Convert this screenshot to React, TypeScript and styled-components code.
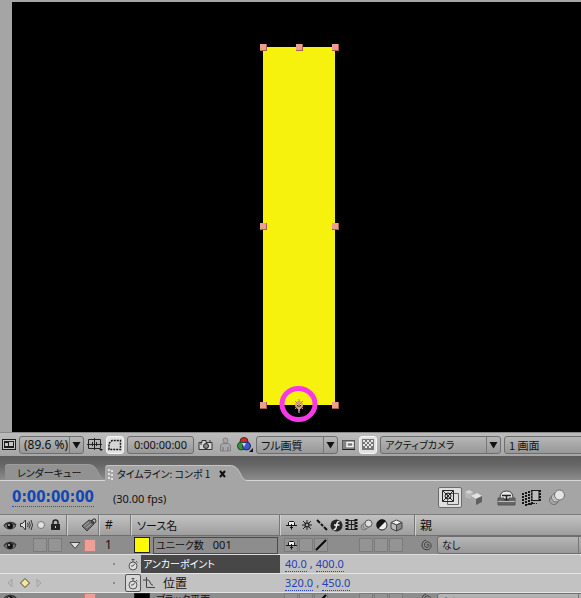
import React from "react";
import styled, { createGlobalStyle, css } from "styled-components";

const latin = `"Noto Sans", "Noto Sans CJK JP", sans-serif`;
const japanese = `"Noto Sans CJK JP", "Noto Sans", sans-serif`;

const GlobalStyle = createGlobalStyle`
  *, *::before, *::after { box-sizing: border-box; }
  body { margin: 0; background: #a5a5a5; overflow: hidden; }
  button, select { font: inherit; color: inherit; margin: 0; padding: 0; }
  svg { display: block; flex: none; }
`;

const Window = styled.div`
  display: flex;
  flex-direction: column;
  height: 100vh;
  overflow: hidden;
  background: #a5a5a5;
  color: #111;
  font: 12px/16px ${latin};
`;

/* ---------- viewer ---------- */

const Viewer = styled.main`
  flex: 1;
  min-height: 0;
  display: flex;
  padding: 2px 0 0 12px;
  background: #a5a5a5;
`;

const Stage = styled.div`
  position: relative;
  flex: 1;
  background: #000;
  overflow: hidden;
`;

const Solid = styled.div`
  position: absolute;
  left: 251px;
  top: 45px;
  width: 72px;
  height: 358px;
  background: #f6f20e;
`;

const Handle = styled.i<{ $x: number; $y: number }>`
  position: absolute;
  left: ${(p) => p.$x}%;
  top: ${(p) => p.$y}%;
  width: 7px;
  height: 7px;
  margin: -3px 0 0 -3px;
  background: #eaa090;
  border: solid #a86048;
  border-width: 0 1px 1px 0;
`;

const Anchor = styled.svg`
  position: absolute;
  left: 50%;
  top: 100%;
  margin: -20px 0 0 -20px;
`;

/* ---------- viewer tool bar ---------- */

const ToolBar = styled.div`
  display: flex;
  align-items: center;
  gap: 3px;
  height: 24px;
  padding: 0 0 0 2px;
  overflow: hidden;
  border-top: 1px solid #8a8a8a;
  background: linear-gradient(#bcbcbc, #a6a6a6);
`;

const ToolIcon = styled.button<{ $w: number; $lit?: boolean }>`
  flex: none;
  display: flex;
  align-items: center;
  justify-content: center;
  width: ${(p) => p.$w}px;
  height: 18px;
  border: 0;
  background: none;
  ${(p) =>
    p.$lit &&
    css`
      border: 1px solid #f4f4f4;
      border-radius: 3px;
      background: #e2e2e2;
    `}
`;

const field = css`
  height: 18px;
  border: 1px solid #6e6e6e;
  border-radius: 3px;
  background: linear-gradient(#b6b6b6, #989898);
`;

const TimeButton = styled.button`
  ${field}
  flex: none;
  width: 67px;
  line-height: 16px;
  font-size: 11px;
`;

const DropBox = styled.div<{ $w?: number; $jp?: boolean; $size: number }>`
  ${field}
  display: flex;
  flex: ${(p) => (p.$w ? "none" : "1")};
  width: ${(p) => (p.$w ? `${p.$w}px` : "auto")};
  margin-right: ${(p) => (p.$w ? 0 : -12)}px;
  min-width: 0;
  overflow: hidden;
  font-family: ${(p) => (p.$jp ? japanese : latin)};
  font-size: ${(p) => p.$size}px;
`;

const Drop = styled.select`
  flex: 1;
  min-width: 0;
  appearance: none;
  border: 0;
  padding-left: 4px;
  background: none;
  font-feature-settings: "palt";
  line-height: 16px;
  outline: 0;
`;

const DropArrow = styled.span`
  flex: none;
  display: flex;
  align-items: center;
  justify-content: center;
  width: 14px;
  border-left: 1px solid #777;
  pointer-events: none;
`;

type SelectProps = { label: string; value: string; width?: number; jp?: boolean; arrow?: boolean; size?: number };
const Select = ({ label, value, width, jp, arrow = true, size = 11 }: SelectProps) => (
  <DropBox $w={width} $jp={jp} $size={size}>
    <Drop aria-label={label} defaultValue={value}>
      <option>{value}</option>
    </Drop>
    {arrow && (
      <DropArrow>
        <svg width="9" height="8"><path d="M0.5 1H8.500L4.500 7.500z" fill="#111" /></svg>
      </DropArrow>
    )}
  </DropBox>
);

/* ---------- tabs ---------- */

const TabBar = styled.div`
  display: flex;
  align-items: flex-end;
  height: 25px;
  padding-left: 5px;
  border-bottom: 1px solid #d6d6d6;
  background: linear-gradient(#5c5c5c, #686868 40%, #8c8c8c);
`;

const Tab = styled.div<{ $active?: boolean }>`
  display: flex;
  height: 16px;
  margin-bottom: ${(p) => (p.$active ? "-1px" : "0")};
  color: ${(p) => (p.$active ? "#a5a5a5" : "#929292")};
`;

const TabBody = styled.div<{ $w: number; $edge: string }>`
  display: flex;
  align-items: center;
  width: ${(p) => p.$w}px;
  border-top: 1px solid ${(p) => p.$edge};
  border-radius: 3px 0 0 0;
  background: currentColor;
`;

const TabButton = styled.button`
  flex: 1;
  border: 0;
  background: none;
  color: #111;
  text-align: left;
  white-space: nowrap;
  font: 10px/14px ${japanese};
  font-feature-settings: "palt";
`;

const TabStart = styled.span`
  flex: none;
  width: 12px;
`;

const TabClose = styled.button`
  flex: none;
  width: 10px;
  height: 12px;
  border: 0;
  background: none;
`;

const TabCap = ({ edge }: { edge: string }) => (
  <svg width="18" height="16">
    <path d="M0 0C7 0 9 4 11 8S14 15 18 16H0z" fill="currentColor" />
    <path d="M0 0.500C7 0.500 9 4 11 8S14 15 18 15.500" fill="none" stroke={edge} />
  </svg>
);

/* ---------- timeline ---------- */

const TimeHeader = styled.div`
  display: flex;
  align-items: center;
  height: 34px;
  padding: 0 14px 0 12px;
  border-bottom: 1px solid #7c7c7c;
  background: #a5a5a5;
`;

const CurrentTime = styled.button`
  border: 0;
  border-bottom: 1px dotted #2350b8;
  background: none;
  color: #1445b4;
  font: bold 15px/18px "DejaVu Sans Condensed", "DejaVu Sans", sans-serif;
`;

const Rate = styled.span`
  flex: 1;
  padding: 3px 0 0 19px;
  white-space: nowrap;
  font-size: 11px;
`;

const HeaderTools = styled.div`
  display: flex;
  align-items: center;
  gap: 4px;
`;

const HeaderTool = styled.button<{ $lit?: boolean; $apart?: boolean }>`
  display: flex;
  align-items: center;
  justify-content: center;
  width: ${(p) => (p.$lit ? 24 : 21)}px;
  height: 21px;
  margin-left: ${(p) => (p.$apart ? 8 : 0)}px;
  margin-right: ${(p) => (p.$lit ? -3 : 0)}px;
  border: ${(p) => (p.$lit ? "1px solid #6c6c6c" : "0")};
  border-radius: 2px;
  background: ${(p) => (p.$lit ? "#dedede" : "none")};
`;

const Sheet = styled.table`
  width: 100%;
  border-collapse: separate;
  border-spacing: 0;
  table-layout: fixed;
  th, td { padding: 0; font-weight: normal; text-align: left; overflow: hidden; }
`;

const Col = styled.col<{ $w?: number }>`
  width: ${(p) => (p.$w ? `${p.$w}px` : "auto")};
`;

const HeadCell = styled.th`
  height: 21px;
  border-bottom: 1px solid #707070;
  border-left: 1px solid #d0d0d0;
  box-shadow: inset -1px 0 #777;
  background: linear-gradient(#c2c2c2, #9e9e9e);
  &:first-child { border-left: 0; }
  &:last-child { box-shadow: none; }
`;

const LayerCell = styled.td`
  height: 19px;
  border-bottom: 1px solid #dedede;
  background: #8d8d8d;
`;

const PropertyCell = styled.td`
  height: 19px;
  border-bottom: 1px solid #e4e4e4;
  background: #c2c2c2;
`;

const Line = styled.div<{ $pad?: number }>`
  display: flex;
  align-items: center;
  height: 18px;
  padding-left: ${(p) => p.$pad ?? 0}px;
  white-space: nowrap;
`;

const Slot = styled.span<{ $w?: number }>`
  flex: none;
  display: flex;
  align-items: center;
  justify-content: center;
  width: ${(p) => p.$w ?? 15}px;
`;

const SlotButton = styled.button<{ $w?: number; $box?: boolean }>`
  flex: none;
  display: flex;
  align-items: center;
  justify-content: center;
  width: ${(p) => p.$w ?? 14}px;
  height: 14px;
  margin-right: 1px;
  border: 1px solid ${(p) => (p.$box ? "#7c7c7c" : "transparent")};
  background: ${(p) => (p.$box ? "#949494" : "none")};
`;

const Jp = styled.span<{ $size?: number }>`
  font: ${(p) => p.$size ?? 12}px/16px ${japanese};
  font-feature-settings: "palt";
`;

const Swatch = styled.button<{ $c: string; $w: number }>`
  flex: none;
  width: ${(p) => p.$w}px;
  height: ${(p) => (p.$w > 13 ? 16 : 13)}px;
  border: 1px solid ${(p) => (p.$w > 13 ? "#222" : "#c08078")};
  background: ${(p) => p.$c};
`;

const LayerName = styled.button`
  flex: 1;
  display: flex;
  align-items: center;
  gap: 9px;
  height: 17px;
  margin: 0 2px 0 3px;
  padding-left: 2px;
  border: 1px solid #4a4a4a;
  background: none;
  font-size: 11px;
`;

const KeyButton = styled.button<{ $w: number }>`
  flex: none;
  width: ${(p) => p.$w}px;
  height: 16px;
  border: 0;
  background: none;
`;

const Gap = styled.span`
  flex: none;
  width: 69px;
`;

const Dot = styled.span`
  flex: none;
  width: 2px;
  height: 2px;
  margin-right: 10px;
  background: #8c8c8c;
`;

const Watch = styled.button<{ $on?: boolean }>`
  flex: none;
  display: flex;
  align-items: center;
  justify-content: center;
  width: 16px;
  height: 18px;
  border: ${(p) => (p.$on ? "1px solid #555" : "0")};
  border-radius: 2px;
  background: ${(p) => (p.$on ? "#d6d6d6" : "none")};
`;

const PropertyName = styled.button<{ $selected?: boolean }>`
  flex: 1;
  display: flex;
  align-items: center;
  gap: 7px;
  height: 18px;
  padding-left: 2px;
  border: 0;
  background: ${(p) => (p.$selected ? "#474747" : "none")};
  color: ${(p) => (p.$selected ? "#fff" : "#111")};
`;

const Value = styled.button`
  height: 15px;
  border: 0;
  border-bottom: 1px dotted #2a44b0;
  background: none;
  color: #2740b4;
  font-size: 11px;
  line-height: 14px;
`;

const Comma = styled.span`
  padding: 0 3px;
  color: #2740b4;
  font-size: 11px;
`;

const Clip = styled.div`
  display: flex;
  align-items: flex-start;
  height: 5px;
  overflow: hidden;
  background: #8d8d8d;
`;

const NextName = styled.span`
  flex: none;
  width: 130px;
  padding-left: 6px;
  font: 10px/12px ${japanese};
  font-feature-settings: "palt";
`;

/* ---------- drawings ---------- */

const Eye = () => (
  <svg width="14" height="11" viewBox="0 0 14 11">
    <path d="M1 6C3 2 10 1 13 5" fill="none" stroke="#333" strokeWidth="1.500" />
    <path d="M1 6C4 3 10 3 13 6C10 10 4 10 1 6z" fill="#777" stroke="#444" />
    <circle cx="7" cy="6" r="3" fill="#151515" />
    <circle cx="6" cy="5" r="1" fill="#bbb" />
  </svg>
);
const Speaker = () => (
  <svg width="14" height="12" viewBox="0 0 14 12" fill="none" stroke="#333">
    <path d="M1.500 4.500H3.500L6.500 1V11L3.500 7.500H1.500z" fill="#ddd" />
    <path d="M8.500 4Q10 6 8.500 8M10 2.500Q12.500 6 10 9.500M12 1Q15 6 12 11" />
  </svg>
);
const SoloDot = () => (
  <svg width="10" height="10"><circle cx="5" cy="5" r="3.500" fill="#e2e2e2" stroke="#777" /></svg>
);
const Lock = () => (
  <svg width="11" height="12">
    <path d="M3 6V3.500Q3 1 5.500 1T8 3.500V6" fill="none" stroke="#222" strokeWidth="1.500" />
    <rect x="1" y="5" width="9" height="6" fill="#222" />
    <path d="M5 7H6V9H5z" fill="#ccc" />
  </svg>
);
const Tag = () => (
  <svg width="16" height="14" viewBox="0 0 16 14">
    <path d="M1 8L8 2L12 3L13 6L6 13z" fill="#6f6f6f" stroke="#3c3c3c" />
    <path d="M3 8L8 4M5 10L10 6" stroke="#aaa" />
    <path d="M10 5L12 1Q15 0 15 3T11 5" fill="none" stroke="#333" />
  </svg>
);
const Shy = () => (
  <svg width="13" height="11" viewBox="0 0 13 11" fill="none" stroke="#151515">
    <path d="M3.500 5V2.500L4.500 1.500H8.500L9.500 2.500V5" fill="#eee" />
    <path d="M1 5.500H12M6.500 4V9.500M5 7.500H8" />
  </svg>
);
const Sun = () => (
  <svg width="12" height="12" fill="none" stroke="#222">
    <circle cx="6" cy="6" r="2" strokeWidth="1.500" />
    <path d="M6 1V3M6 9V11M1 6H3M9 6H11M2 2L4 4M8 8L10 10M2 10L4 8M8 4L10 2" />
  </svg>
);
const Quality = () => (
  <svg width="12" height="12"><path d="M1 1L4 4M5 5L7 7M8 8L11 11" stroke="#111" strokeWidth="2" /></svg>
);
const Slash = () => (
  <svg width="12" height="12"><path d="M1 11L11 1" stroke="#050505" strokeWidth="2" /></svg>
);
const Effects = () => (
  <svg width="13" height="13" viewBox="0 0 13 13">
    <circle cx="6.500" cy="6.500" r="6" fill="#252525" />
    <path d="M9.500 2.500Q7.500 2 7 4.500L6 9Q5.500 11 3.500 10.500M4 6H9.500" fill="none" stroke="#eee" strokeWidth="1.500" />
  </svg>
);
const Film = () => (
  <svg width="13" height="12" viewBox="0 0 13 12">
    <path d="M2 0V12M11 0V12" stroke="#151515" strokeWidth="3" strokeDasharray="2 1" />
    <path d="M3 1.500H10V10.500H3zM3 5.500H10M6.500 1V11" fill="#aaa" stroke="#222" />
  </svg>
);
const BlurBalls = () => (
  <svg width="13" height="12" viewBox="0 0 13 12" stroke="#777">
    <circle cx="4" cy="8" r="3" fill="#aaa" />
    <circle cx="6" cy="6.500" r="3" fill="#bbb" />
    <circle cx="8.500" cy="4.500" r="3.500" fill="#ddd" stroke="#555" />
  </svg>
);
const Half = () => (
  <svg width="12" height="12">
    <circle cx="6" cy="6" r="5" fill="#eee" stroke="#222" />
    <path d="M2 10A5.500 5.500 0 0 1 10 2z" fill="#151515" />
  </svg>
);
const Cube = () => (
  <svg width="13" height="13" viewBox="0 0 13 13" stroke="#444">
    <path d="M1 3.500L6.500 1L12 3.500L6.500 6z" fill="#eee" />
    <path d="M1 3.500V9.500L6.500 12V6z" fill="#bbb" />
    <path d="M12 3.500V9.500L6.500 12V6z" fill="#888" />
  </svg>
);
const Spiral = () => (
  <svg width="12" height="12" viewBox="0 0 12 12" fill="none" stroke="#3c3c3c">
    <path d="M6 6.500C5.500 5 8 4.500 8 6.500C8 9 4 9 3.500 6.500C3 3 6.500 2 8.500 3.500C11 5.500 10.500 9.500 7.500 10.500C4.500 11.300 1.500 10 1 7C0.700 4 2.500 1.500 5 1" />
  </svg>
);
const Stopwatch = () => (
  <svg width="12" height="13" viewBox="0 0 12 13" fill="none" stroke="#555">
    <circle cx="6" cy="8" r="4" fill="#ddd" />
    <path d="M4.500 1.500H7.500M6 2V4M9 3L10.500 4.500M6 8L8 5.500M6 8H4" />
  </svg>
);
const Graph = () => (
  <svg width="13" height="12" fill="none" stroke="#444">
    <path d="M3.500 0V10.500H12M0 3H3Q6 2 7 5T9 8H10" />
  </svg>
);

const Preview = () => (
  <svg width="14" height="11">
    <rect x="0.500" y="0.500" width="13" height="10" fill="#c5c5c5" stroke="#1c1c1c" />
    <rect x="2" y="2" width="10" height="7" fill="#1c1c1c" />
    <path d="M3 4H6V7H3zM7 3H11V7H7z" fill="#c5c5c5" />
  </svg>
);
const Grid = () => (
  <svg width="16" height="13" fill="none" stroke="#222">
    <path d="M1.500 1.500H13.500V10.500H1.500zM5.500 4V8M9.500 4V8M7.500 0V12M0 6.500H15" />
    <path d="M12 11H16L14 13z" fill="#111" stroke="none" />
  </svg>
);
const Mask = () => (
  <svg width="14" height="12">
    <path d="M1 10.500V4.500L4 1.500H12.500V10.500z" fill="#d5d5d5" stroke="#151515" strokeWidth="1.500" strokeDasharray="2 1" />
  </svg>
);
const Camera = () => (
  <svg width="15" height="12" viewBox="0 0 15 12">
    <path d="M1 3.500H4V1.500H8V3.500H14V10.500H1z" fill="#d5d5d5" stroke="#333" />
    <circle cx="8" cy="7" r="2.500" fill="#888" stroke="#222" />
    <path d="M2 5H4M11 2H13" stroke="#333" />
  </svg>
);
const Person = () => (
  <svg width="13" height="15" viewBox="0 0 13 15" fill="#a8a8a8" stroke="#808080">
    <circle cx="6.500" cy="3.500" r="2.500" />
    <path d="M1.500 14V9Q1.500 7 4 6.500H9Q11.500 7 11.500 9V14H9V10V14H4V10V14z" />
  </svg>
);
const Channels = () => (
  <svg width="16" height="15" viewBox="0 0 16 15">
    <circle cx="7" cy="4.500" r="4" fill="#c92f28" stroke="#55201c" />
    <circle cx="4.500" cy="9" r="4" fill="#329436" stroke="#1c4a20" />
    <circle cx="9.500" cy="9" r="4" fill="#4256cc" stroke="#1e2860" />
    <path d="M5 6H9L7 10z" fill="#d8d8d8" />
    <path d="M16 11V15H12z" fill="#111" />
  </svg>
);
const Region = () => (
  <svg width="14" height="10">
    <rect x="0.500" y="0.500" width="12" height="9" fill="#828282" stroke="#5a5a5a" />
    <path d="M0.500 9.500H13" stroke="#222" />
    <rect x="5" y="2.500" width="6" height="4" fill="#777" stroke="#f6f6f6" strokeWidth="1.500" />
  </svg>
);
const Checker = () => (
  <svg width="12" height="11">
    <rect width="12" height="11" fill="#777" />
    <g stroke="#e6e6e6" strokeWidth="2" strokeDasharray="2 2">
      <path d="M1 2H11M1 6H11" /><path d="M3 4H11M3 8H11" />
    </g>
    <rect x="0.500" y="0.500" width="11" height="10" fill="none" stroke="#777" />
  </svg>
);
const LiveUpdate = () => (
  <svg width="19" height="17" fill="none" stroke="#222">
    <path d="M6.500 4.500H17.500V15.500H6.500z" stroke="#666" />
    <path d="M1.500 1.500H12.500V12.500H1.500zM2 2L12 12M12 2L2 12" />
    <circle cx="7" cy="7" r="3" />
  </svg>
);
const Draft3D = () => (
  <svg width="20" height="17" viewBox="0 0 20 17">
    <path d="M1 3L5 1L9 3V8L5 10L1 8z" fill="#b6b6b6" />
    <path d="M1 3L5 5L9 3L5 1z" fill="#d2d2d2" />
    <path d="M7 7L13 4L18 7L12 10z" fill="#e2e2e2" />
    <path d="M7 7L12 10V16L7 13z" fill="#a8a8a8" />
    <path d="M18 7L12 10V16L18 13z" fill="#606060" />
  </svg>
);
const HideShy = () => (
  <svg width="19" height="16" viewBox="0 0 19 16">
    <path d="M3 8Q3 1 9.500 1T16 8" fill="#e8e8e8" stroke="#444" />
    <path d="M5 5.500H14M9.500 5V11M7 10H12" stroke="#222" strokeWidth="1.500" />
    <path d="M1 8H7V11H12V8H18V15H1z" fill="#666" stroke="#555" />
    <path d="M1 11.500H18" stroke="#bbb" />
  </svg>
);
const Frames = () => (
  <svg width="21" height="17" viewBox="0 0 21 17">
    <g stroke="#151515" strokeWidth="2" strokeDasharray="2 1">
      <path d="M2 4V16M5 3V17M8 2V16M11 1V15M19 1V13" />
    </g>
    <path d="M11 1.500H18V11.500H11z" fill="#bcbcbc" stroke="#151515" />
    <path d="M9 14.500H16M6 15.500H12" stroke="#222" strokeDasharray="2 1" />
  </svg>
);
const MotionBlur = () => (
  <svg width="18" height="17" viewBox="0 0 18 17" stroke="#707070">
    <circle cx="6" cy="11" r="4.500" fill="#a8a8a8" />
    <circle cx="8" cy="8.500" r="4.500" fill="#c2c2c2" />
    <circle cx="11.500" cy="6" r="5" fill="#e4e4e4" />
  </svg>
);

const handles = [[0, 0], [50, 0], [100, 0], [0, 50], [100, 50], [0, 100], [100, 100]];
const switches: [string, React.FC][] = [
  ["shy", Shy], ["collapse", Sun], ["quality", Quality], ["effects", Effects],
  ["blend", Film], ["blur", BlurBalls], ["adjust", Half], ["3d", Cube],
];

type PropertyProps = { name: string; x: string; y: string; selected?: boolean; keyed?: boolean };
const Property = ({ name, x, y, selected, keyed }: PropertyProps) => (
  <tr>
    <PropertyCell colSpan={4}>
      <Line $pad={4}>
        {keyed ? (
          <>
            <KeyButton $w={12} aria-label="previous key">
              <svg width="10" height="12"><path d="M8 2V10L4 6z" fill="#bcbcbc" stroke="#a4a4a4" /></svg>
            </KeyButton>
            <KeyButton $w={18} aria-label="key">
              <svg width="18" height="12"><path d="M9 1.500L13.500 6L9 10.500L4.500 6z" fill="#eee79c" stroke="#4a4630" /></svg>
            </KeyButton>
            <KeyButton $w={10} aria-label="next key">
              <svg width="10" height="12"><path d="M3 2V10L7 6z" fill="#bcbcbc" stroke="#a4a4a4" /></svg>
            </KeyButton>
          </>
        ) : (
          <Slot $w={40} />
        )}
        <Gap />
        <Dot />
        <Watch $on={keyed} aria-label="stopwatch"><Stopwatch /></Watch>
        <PropertyName $selected={selected}>
          {keyed && <Graph />}
          <Jp $size={selected ? 10 : 12}>{name}</Jp>
        </PropertyName>
      </Line>
    </PropertyCell>
    <PropertyCell colSpan={2}>
      <Line $pad={5}>
        <Value>{x}</Value><Comma>,</Comma><Value>{y}</Value>
      </Line>
    </PropertyCell>
  </tr>
);

export default function App() {
  return (
    <Window>
      <GlobalStyle />
      <Viewer>
        <Stage>
          <Solid>
            {handles.map(([x, y]) => <Handle key={`${x}-${y}`} $x={x} $y={y} />)}
            <Anchor width="40" height="40" fill="none">
              <ellipse cx="19.500" cy="19" rx="16.500" ry="15.500" stroke="#f838e8" strokeWidth="5" />
              <circle cx="20" cy="20" r="3" stroke="#e0a088" strokeWidth="2" />
              <path d="M20 14V26M16 16L24 24M24 16L16 24" stroke="#c08868" />
              <path d="M20 23V28" stroke="#ddd" />
            </Anchor>
          </Solid>
        </Stage>
      </Viewer>

      <ToolBar>
        <ToolIcon $w={14} aria-label="preview"><Preview /></ToolIcon>
        <Select label="zoom" value="(89.6 %)" width={65} size={12} />
        <ToolIcon $w={16} aria-label="grid"><Grid /></ToolIcon>
        <ToolIcon $w={18} $lit aria-label="mask"><Mask /></ToolIcon>
        <TimeButton>0:00:00:00</TimeButton>
        <ToolIcon $w={16} aria-label="snapshot"><Camera /></ToolIcon>
        <ToolIcon $w={18} aria-label="show snapshot"><Person /></ToolIcon>
        <ToolIcon $w={16} aria-label="channels"><Channels /></ToolIcon>
        <Select label="resolution" value="フル画質" width={82} jp />
        <ToolIcon $w={15} aria-label="region"><Region /></ToolIcon>
        <ToolIcon $w={18} $lit aria-label="transparency"><Checker /></ToolIcon>
        <Select label="camera" value="アクティブカメラ" width={121} jp size={10} />
        <Select label="views" value="1 画面" jp arrow={false} />
      </ToolBar>

      <TabBar>
        <Tab>
          <TabBody $w={82} $edge="#9c9c9c"><TabStart /><TabButton>レンダーキュー</TabButton></TabBody>
          <TabCap edge="#9c9c9c" />
        </Tab>
        <Tab $active>
          <TabBody $w={124} $edge="#c4c4c4">
            <TabStart>
              <svg width="12" height="12"><path d="M4 1V11M7 2V12" stroke="#e2e2e2" strokeWidth="2" strokeDasharray="2 2" /></svg>
            </TabStart>
            <TabButton>タイムライン: コンポ 1</TabButton>
            <TabClose aria-label="close">
              <svg width="8" height="8"><path d="M1 1L6 7M6 1L1 7" stroke="#111" strokeWidth="2" /></svg>
            </TabClose>
          </TabBody>
          <TabCap edge="#c4c4c4" />
        </Tab>
      </TabBar>

      <TimeHeader>
        <CurrentTime>0:00:00:00</CurrentTime>
        <Rate>(30.00 fps)</Rate>
        <HeaderTools>
          <HeaderTool $lit aria-label="live update"><LiveUpdate /></HeaderTool>
          <HeaderTool aria-label="draft 3d"><Draft3D /></HeaderTool>
          <HeaderTool $apart aria-label="hide shy layers"><HideShy /></HeaderTool>
          <HeaderTool aria-label="frame blending"><Frames /></HeaderTool>
          <HeaderTool aria-label="motion blur"><MotionBlur /></HeaderTool>
        </HeaderTools>
      </TimeHeader>

      <Sheet>
        <colgroup>
          <Col $w={67} /><Col $w={32} /><Col $w={32} /><Col $w={149} /><Col $w={135} /><Col />
        </colgroup>
        <thead>
          <tr>
            <HeadCell>
              <Line $pad={2}>
                <Slot $w={16}><Eye /></Slot><Slot $w={15}><Speaker /></Slot>
                <Slot $w={15}><SoloDot /></Slot><Slot $w={14}><Lock /></Slot>
              </Line>
            </HeadCell>
            <HeadCell><Line $pad={13}><Tag /></Line></HeadCell>
            <HeadCell><Line $pad={5}>#</Line></HeadCell>
            <HeadCell><Line $pad={5}><Jp $size={11}>ソース名</Jp></Line></HeadCell>
            <HeadCell>
              <Line $pad={3}>
                {switches.map(([name, Drawing]) => <Slot key={name}><Drawing /></Slot>)}
              </Line>
            </HeadCell>
            <HeadCell><Line $pad={4}><Jp>親</Jp></Line></HeadCell>
          </tr>
        </thead>
        <tbody>
          <tr>
            <LayerCell>
              <Line $pad={2}>
                <SlotButton $w={16} aria-label="visible"><Eye /></SlotButton>
                <Slot $w={14} />
                <SlotButton $box aria-label="solo" /><SlotButton $box aria-label="lock" />
              </Line>
            </LayerCell>
            <LayerCell>
              <Line $pad={1}>
                <SlotButton $w={13} aria-label="expand">
                  <svg width="12" height="9"><path d="M1 1.500H11L6 7.500z" fill="#ddd" stroke="#444" /></svg>
                </SlotButton>
                <Slot $w={2} />
                <Swatch $c="#ee9f96" $w={12} aria-label="label" />
              </Line>
            </LayerCell>
            <LayerCell><Line $pad={6}>1</Line></LayerCell>
            <LayerCell>
              <Line $pad={3}>
                <Swatch $c="#fbf903" $w={16} aria-label="colour" />
                <LayerName><Jp $size={10}>ユニーク数</Jp>001</LayerName>
              </Line>
            </LayerCell>
            <LayerCell>
              <Line $pad={4}>
                <SlotButton $box aria-label="shy"><Shy /></SlotButton>
                <SlotButton $box aria-label="collapse" />
                <SlotButton $box aria-label="quality"><Slash /></SlotButton>
                <Slot /><Slot />
                <SlotButton $box aria-label="blur" />
                <SlotButton $box aria-label="adjustment" />
                <SlotButton $box aria-label="3d" />
              </Line>
            </LayerCell>
            <LayerCell>
              <Line $pad={4}>
                <Slot $w={16}><Spiral /></Slot><Slot $w={2} />
                <Select label="parent" value="なし" jp size={10} />
              </Line>
            </LayerCell>
          </tr>
          <Property name="アンカーポイント" x="40.0" y="400.0" selected />
          <Property name="位置" x="320.0" y="450.0" keyed />
          <tr>
            <td colSpan={6}>
              <Clip>
                <Slot $w={19}><Eye /></Slot><Slot $w={65} />
                <Swatch $c="#ee9f96" $w={12} aria-label="label" />
                <Slot $w={38} />
                <Swatch $c="#000" $w={16} aria-label="colour" />
                <NextName>ブラック平面</NextName>
                <Slot $w={4} />
                <SlotButton $box aria-label="shy" />
                <SlotButton $box aria-label="collapse" />
                <SlotButton $box aria-label="quality"><Slash /></SlotButton>
                <Slot $w={30} />
                <SlotButton $box aria-label="blur" />
                <SlotButton $box aria-label="adjustment" />
                <SlotButton $box aria-label="3d" />
                <Slot $w={15} />
                <Slot $w={16}><Spiral /></Slot><Slot $w={2} />
                <Select label="parent" value="なし" jp size={10} />
              </Clip>
            </td>
          </tr>
        </tbody>
      </Sheet>
    </Window>
  );
}
